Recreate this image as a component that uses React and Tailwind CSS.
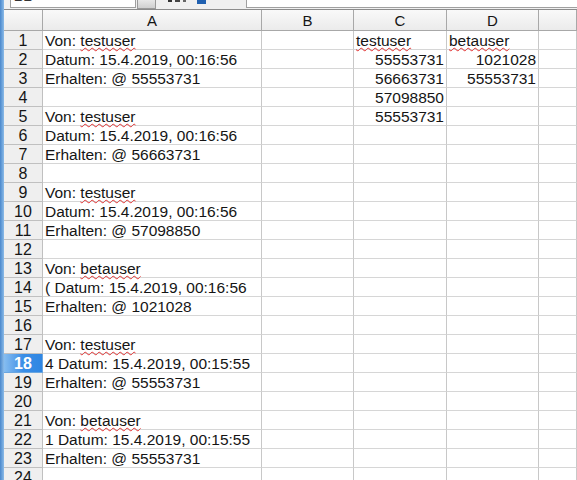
import React from "react";

const rows = [
  ["Von: testuser", "", "testuser", "betauser"],
  ["Datum: 15.4.2019, 00:16:56", "", "55553731", "1021028"],
  ["Erhalten: @ 55553731", "", "56663731", "55553731"],
  ["", "", "57098850", ""],
  ["Von: testuser", "", "55553731", ""],
  ["Datum: 15.4.2019, 00:16:56"],
  ["Erhalten: @ 56663731"],
  [""],
  ["Von: testuser"],
  ["Datum: 15.4.2019, 00:16:56"],
  ["Erhalten: @ 57098850"],
  [""],
  ["Von: betauser"],
  ["( Datum: 15.4.2019, 00:16:56"],
  ["Erhalten: @ 1021028"],
  [""],
  ["Von: testuser"],
  ["4 Datum: 15.4.2019, 00:15:55"],
  ["Erhalten: @ 55553731"],
  [""],
  ["Von: betauser"],
  ["1 Datum: 15.4.2019, 00:15:55"],
  ["Erhalten: @ 55553731"],
  [""],
];

function Wavy({ children }) {
  return (
    <span className="underline decoration-wavy decoration-[#e03030] underline-offset-[1px] [text-decoration-thickness:1px]">
      {children}
    </span>
  );
}

function renderText(t) {
  if (t.startsWith("Von: ")) {
    return (
      <>
        Von: <Wavy>{t.slice(5)}</Wavy>
      </>
    );
  }
  if (t === "testuser" || t === "betauser") return <Wavy>{t}</Wavy>;
  return t;
}

const cell = "h-[19px] border-r border-b border-r-[#c8c8c8] border-b-[#d6d6d6] leading-[19px] whitespace-nowrap";

export default function App() {
  return (
    <div
      className="w-[577px] h-[480px] overflow-hidden flex bg-white text-[15.5px] text-[#151515]"
      style={{ fontFamily: '"Liberation Sans", Arial, sans-serif' }}
    >
      <div className="w-[4px] shrink-0 bg-gradient-to-r from-[#4a88cc] to-[#8bbbe8]" />
      <div className="flex-1 flex flex-col">
        {/* toolbar */}
        <div className="h-[11px] bg-[#f0f0f0] relative flex items-start">
          <div className="ml-[6px] w-[126px] h-[8px] bg-white border border-t-0 border-[#a0a0a0] overflow-hidden relative">
            <span className="absolute left-[3px] top-[-13px] text-[13px] font-bold text-[#333]">BB</span>
          </div>
          <div className="ml-[1px] w-[19px] h-[9px] border border-t-0 border-[#9a9a9a] bg-gradient-to-b from-[#e8e8e8] to-[#d0d0d0]" />
          <div className="ml-[12px] h-[6px] flex gap-[3px] items-start">
            <div className="w-[4px] h-[2px] bg-[#333]" />
            <div className="w-[5px] h-[2px] bg-[#444]" />
            <div className="w-[3px] h-[2px] bg-[#666]" />
          </div>
          <div className="ml-[11px] w-[9px] h-[4px] bg-[#2060b0]" />
          <div className="ml-[40px] flex-1 h-[8px] bg-white border-l border-b border-[#a0a0a0]" />
        </div>
        {/* sheet */}
        <div className="grid grid-cols-[39px_219px_92px_93px_92px_1fr] border-t border-[#8c8c8c]">
          <div className="h-[21px] bg-gradient-to-b from-[#f9f9f9] to-[#ebebeb] border-r border-b border-[#a8a8a8]" />
          {["A", "B", "C", "D", ""].map((h, i) => (
            <div
              key={i}
              className="h-[21px] bg-gradient-to-b from-[#f9f9f9] to-[#ebebeb] border-r border-b border-[#a8a8a8] text-center leading-[21px] text-[15px]"
            >
              {h}
            </div>
          ))}
          {rows.map((r, idx) => {
            const n = idx + 1;
            const sel = n === 18;
            return (
              <React.Fragment key={n}>
                <div
                  className={
                    sel
                      ? "h-[19px] border-r border-b border-[#6aa6e0] bg-gradient-to-r from-[#86bdf0] via-[#3a8ee6] to-[#2f86e3] text-white font-bold text-center leading-[19px] text-[16px]"
                      : "h-[19px] border-r border-b border-[#c0c0c0] bg-[#efefef] text-center leading-[19px] text-[16px]"
                  }
                >
                  {n}
                </div>
                <div className={cell + " pl-[2px]"}>{renderText(r[0] || "")}</div>
                <div className={cell}></div>
                <div className={cell + (r[2] === "testuser" ? " pl-[2px]" : " text-right pr-[2px]")}>
                  {renderText(r[2] || "")}
                </div>
                <div className={cell + (r[3] === "betauser" ? " pl-[2px]" : " text-right pr-[2px]")}>
                  {renderText(r[3] || "")}
                </div>
                <div className={cell}></div>
              </React.Fragment>
            );
          })}
        </div>
      </div>
    </div>
  );
}
